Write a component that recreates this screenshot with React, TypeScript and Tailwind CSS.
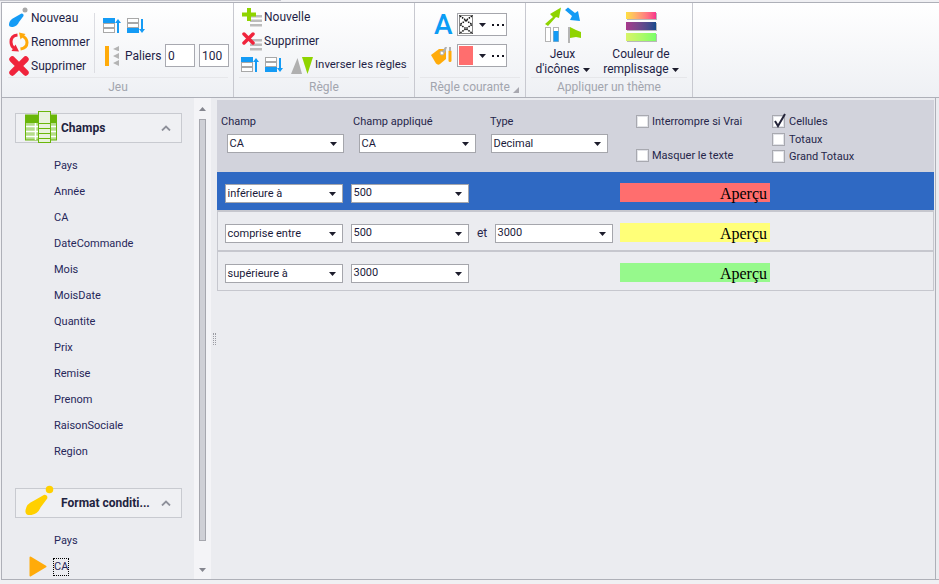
import type { ReactNode } from "react";

const font = { fontFamily: 'Roboto, "Noto Sans", sans-serif' };

const fields = ["Pays", "Année", "CA", "DateCommande", "Mois", "MoisDate", "Quantite", "Prix", "Remise", "Prenom", "RaisonSociale", "Region"];

const Caret = () => (
    <svg width="7" height="4" viewBox="0 0 7 4" className="shrink-0">
        <path d="M0 0h7L3.500 4z" fill="#1c1c2c" />
    </svg>
);

const Dots = () => (
    <svg width="12" height="2" viewBox="0 0 12 2" className="ml-[6px] shrink-0">
        <path d="M0 0h2v2H0zM5 0h2v2H5zM10 0h2v2h-2z" fill="#15151f" />
    </svg>
);

const BrushIcon = ({ color, dot, size = 22 }: { color: string; dot: string; size?: number }) => (
    <svg width={size} height={size} viewBox="0 0 22 22">
        <circle cx="17" cy="3" r="2.500" fill={dot} />
        <path d="M13.500 6.500 Q16 6.500 15.500 9 L11 15 Q9.500 19 5 20 Q0.500 20.500 1 17 Q1.500 12.500 6.500 10.500z" fill={color} />
    </svg>
);

const RenameIcon = () => (
    <svg width="20" height="20" viewBox="0 0 20 20" fill="none">
        <path d="M8.500 3 Q2 3.500 2 10 Q2 14 5 16" stroke="#f0243c" strokeWidth="3" />
        <path d="M10 19.500 L2.500 19 L6.500 12.500z" fill="#f0243c" />
        <path d="M12.500 3.500 Q18 6 18 10.500 Q18 16 11.500 17" stroke="#ffa90a" strokeWidth="3" />
        <path d="M10 0.500 L16.500 2 L11.500 7.500z" fill="#ffa90a" />
    </svg>
);

const CrossIcon = ({ size = 18 }: { size?: number }) => (
    <svg width={size} height={size} viewBox="0 0 18 18">
        <path d="M3 3 L15 15 M15 3 L3 15" stroke="#f0243c" strokeWidth="5.500" strokeLinecap="round" />
    </svg>
);

const MoveIcon = ({ down }: { down?: boolean }) => (
    <svg width="18" height="16" viewBox="0 0 18 16">
        <rect x="0.500" y="0.500" width="11" height="4" fill={down ? "#fff" : "#149bf5"} stroke={down ? "#a8a8a8" : "#149bf5"} />
        <rect x="0.500" y="5.500" width="11" height="4" fill="#fff" stroke="#a8a8a8" />
        <rect x="0.500" y="10.500" width="11" height="4" fill={down ? "#149bf5" : "#fff"} stroke={down ? "#149bf5" : "#a8a8a8"} />
        {down ? <path d="M14 1h2v10h2l-3 4-3-4h2z" fill="#149bf5" /> : <path d="M15 1l3 4h-2v10h-2V5h-2z" fill="#149bf5" />}
    </svg>
);

const PaliersIcon = () => (
    <svg width="16" height="20" viewBox="0 0 16 20">
        <rect x="0" y="0" width="4" height="20" fill="#ffab0a" />
        <path d="M8 3l6-3v5h-1zM8 10l6-3v6zM8 17l6-3v6z" fill="#b4b4b4" />
    </svg>
);

const RuleIcon = ({ add }: { add?: boolean }) => (
    <svg width="21" height="20" viewBox="0 0 21 20">
        <rect x="8" y="8" width="12" height="2.500" fill="#bcbcbc" />
        <rect x="8" y="12.500" width="12" height="2.500" fill="#bcbcbc" />
        <rect x="8" y="17" width="12" height="2.500" fill="#bcbcbc" />
        {add ? (
            <path d="M5 1h4v4.500h5v4H9V14H5V9.500H0v-4h5z" fill="#8fd400" />
        ) : (
            <path d="M2 3 L11 12 M11 3 L2 12" stroke="#f0243c" strokeWidth="3.500" strokeLinecap="round" />
        )}
    </svg>
);

const InvertIcon = () => (
    <svg width="24" height="18" viewBox="0 0 24 18">
        <path d="M0 18L6.500 2 11 18z" fill="#b0b0b0" />
        <path d="M11 1h11l-5.500 17z" fill="#8fd400" />
    </svg>
);

const TagIcon = () => (
    <svg width="21" height="21" viewBox="0 0 21 21">
        <path d="M0 10 L8 4 H15 V14 L9 19 Q7 20.500 5 18.500z" fill="#ffab0a" />
        <circle cx="11" cy="8" r="2" fill="#fff" stroke="#b0b0b0" />
        <path d="M11 7 L14 2 H16 L14 8z" fill="#b0b0b0" />
        <rect x="17.500" y="5" width="3" height="12" rx="1.500" fill="#ffab0a" />
        <rect x="18" y="2" width="2" height="4" fill="#b0b0b0" />
    </svg>
);

const IconSetsIcon = () => (
    <svg width="38" height="36" viewBox="0 0 38 36">
        <path d="M1 17 L9 10 L6 7 L17 0.500 L15 11 L12 10 L4 19z" fill="#8fd400" />
        <path d="M21 3 L24 0.500 L31 6 L34 4 L36 14 L26 13 L28 9z" fill="#149bf5" />
        <rect x="1.500" y="20.500" width="5" height="14" fill="#fff" stroke="#b4b4b4" />
        <rect x="9.500" y="20.500" width="5" height="14" fill="#fff" stroke="#b4b4b4" />
        <rect x="9.500" y="24" width="5" height="10.500" fill="#149bf5" />
        <rect x="24" y="20" width="2" height="16" fill="#b4b4b4" />
        <path d="M26 20 L32 23 L37 25 L37 31 L32 30 L26 31z" fill="#8fd400" />
    </svg>
);

const GradientBars = () => (
    <div className="flex flex-col gap-[3px]">
        <div className="h-[7px] w-[30px] bg-gradient-to-r from-[#ffe040] to-[#f8328c] shadow-[1px_1px_0_#b8b8b8]" />
        <div className="h-[8px] w-[30px] bg-gradient-to-r from-[#a8388c] to-[#124a8c] shadow-[1px_1px_0_#b8b8b8]" />
        <div className="h-[8px] w-[30px] bg-gradient-to-r from-[#d8f468] to-[#78ff68] shadow-[1px_1px_0_#b8b8b8]" />
    </div>
);

const TableIcon = () => (
    <svg width="33" height="33" viewBox="0 0 33 33">
        <rect x="0.500" y="4" width="31" height="25" fill="#b5dc8a" stroke="#6ab60a" />
        <rect x="0" y="4" width="32" height="8" fill="#6ab60a" />
        <path d="M1 15.500h30M1 20.500h30M1 25.500h30M10.500 12v17" stroke="#fff" strokeWidth="1.500" />
        <rect x="13.500" y="0.500" width="12" height="31" fill="#e8f2dc" stroke="#6ab60a" />
        <path d="M14 12.500h11M14 17.500h11M14 22.500h11M14 27.500h11" stroke="#6ab60a" />
    </svg>
);

const SmallAction = ({ icon, label, width }: { icon: ReactNode; label: string; width: string }) => (
    <div className="flex h-[24px] items-center">
        <div className={`flex shrink-0 items-center justify-center ${width}`}>{icon}</div>
        <span className="whitespace-nowrap">{label}</span>
    </div>
);

const RibbonGroup = ({ title, width, children, corner }: { title: string; width: string; children: ReactNode; corner?: boolean }) => (
    <div className={`relative flex shrink-0 flex-col border-r border-[#c8c9d0] ${width}`}>
        <div className="h-[75px]">{children}</div>
        <div className="mx-[5px] -mt-[1px] border-t border-[#e6e7ea] pt-[1px] text-center text-[12px] leading-[16px] text-[#a2a5ae]">{title}</div>
        {corner && (
            <svg width="6" height="6" viewBox="0 0 6 6" className="absolute right-[6px] bottom-[4px]">
                <path d="M6 0v6H0z" fill="#a8a8b0" />
            </svg>
        )}
    </div>
);

const Dropdown = ({ value, width, high }: { value: string; width: string; high?: boolean }) => (
    <div className={`flex h-[19px] shrink-0 items-center justify-between border border-[#a5a6ac] bg-white pr-[6px] pl-[1.500px] text-[11px] text-[#1a1a3a] ${width}`}>
        <span className={high ? "-mt-[1px]" : "mt-[1px]"}>{value}</span>
        <Caret />
    </div>
);

const Check = ({ label, checked, className, gap = "gap-[3px]" }: { label: string; checked?: boolean; className?: string; gap?: string }) => (
    <div className={`relative flex h-[13px] items-center ${gap} ${className ?? ""}`}>
        <div className="flex h-[13px] w-[13px] shrink-0 items-center justify-center border border-[#a8a9b0] bg-[#e2e3e8]">
            <div className="h-[9px] w-[9px] bg-white" />
        </div>
        {checked && (
            <svg width="14" height="15" viewBox="0 0 14 15" className="absolute -top-[2px] left-[1px]">
                <path d="M2 8 L5 13 L12 1" fill="none" stroke="#24243a" strokeWidth="2" />
            </svg>
        )}
        <span className="text-[11px] leading-[13px] whitespace-nowrap text-[#26264a]">{label}</span>
    </div>
);

const Preview = ({ color }: { color: string }) => (
    <div
        className={`-mt-[1px] ml-auto flex h-[19px] w-[150px] items-center justify-end pt-[3px] pr-[3px] text-[16px] text-black ${color}`}
        style={{ fontFamily: '"Liberation Serif", serif' }}
    >
        Aperçu
    </div>
);

const GroupHeader = ({ icon, label }: { icon: ReactNode; label: string }) => (
    <div className="relative mr-[12px] ml-[13px] flex h-[30px] items-center border border-[#c8cad0] bg-[#eff0f3] pl-[45px] text-[12px] font-bold text-[#1e2340]">
        <div className="absolute -top-[3px] left-[9px]">{icon}</div>
        <span>{label}</span>
        <svg width="10" height="6" viewBox="0 0 10 6" className="absolute top-[11px] right-[10px]">
            <path d="M1 5.500L5 1.500l4 4" fill="none" stroke="#8e909a" strokeWidth="1.800" />
        </svg>
    </div>
);

const FieldItem = ({ label, active }: { label: string; active?: boolean }) => (
    <div className="relative flex h-[26px] items-center pt-[2px] pl-[52px] text-[11px] text-[#27275a]">
        {active && (
            <svg width="18" height="21" viewBox="0 0 18 21" className="absolute top-[3px] left-[27px]">
                <path d="M1.500 1.500 L16.500 10.500 L1.500 19.500z" fill="#ffab0a" stroke="#ffab0a" strokeWidth="2" strokeLinejoin="round" />
            </svg>
        )}
        <span className={active ? "outline outline-1 outline-dotted outline-black" : ""}>{label}</span>
    </div>
);

export default function App() {
    return (
        <div className="flex h-[584px] w-[939px] flex-col overflow-hidden bg-[#f0f0f3] text-[12px]" style={font}>
            <div className="h-[2px] w-[281px] shrink-0 border-t border-[#c4c5cc]" />
            {/* ruban */}
            <div className="ml-[1px] flex h-[96px] shrink-0 border-y border-l border-[#aeb0b8] bg-gradient-to-b from-white to-[#eef0f4] pl-[1px] text-[#1e1e46]">
                <RibbonGroup title="Jeu" width="w-[231px]">
                    <div className="flex pt-[2px]">
                        <div className="w-[91px] pt-[1px] pl-[4px]">
                            <SmallAction icon={<BrushIcon color="#149bf5" dot="#a8a8a8" />} label="Nouveau" width="w-[24px]" />
                            <SmallAction icon={<RenameIcon />} label="Renommer" width="w-[24px]" />
                            <SmallAction icon={<CrossIcon size={20} />} label="Supprimer" width="w-[24px]" />
                        </div>
                        <div className="mt-[8px] h-[60px] w-px bg-[#dcdde2]" />
                        <div className="pl-[8px]">
                            <div className="flex h-[30px] items-end gap-[6px] pb-[1px]">
                                <MoveIcon />
                                <MoveIcon down />
                            </div>
                            <div className="mt-[9px] flex h-[23px] items-center">
                                <div className="ml-[2px] w-[20px]">
                                    <PaliersIcon />
                                </div>
                                <span className="w-[40px]">Paliers</span>
                                <div className="flex h-[23px] w-[30px] items-center border border-[#a8a9b0] bg-white pl-[2px]">0</div>
                                <div className="ml-[4px] flex h-[23px] w-[30px] items-center border border-[#a8a9b0] bg-white pl-[2px]">100</div>
                            </div>
                        </div>
                    </div>
                </RibbonGroup>
                <RibbonGroup title="Règle" width="w-[181px]">
                    <div className="pt-[2px] pl-[7px]">
                        <SmallAction icon={<RuleIcon add />} label="Nouvelle" width="w-[23px]" />
                        <SmallAction icon={<RuleIcon />} label="Supprimer" width="w-[23px]" />
                        <div className="flex h-[24px] items-center">
                            <MoveIcon />
                            <div className="ml-[6px]">
                                <MoveIcon down />
                            </div>
                            <div className="ml-[8px]">
                                <InvertIcon />
                            </div>
                            <span className="text-[11.400px] whitespace-nowrap">Inverser les règles</span>
                        </div>
                    </div>
                </RibbonGroup>
                <RibbonGroup title="Règle courante" width="w-[111px]" corner>
                    <div className="flex flex-col gap-[8px] pt-[10px] pl-[19px]">
                        <div className="flex h-[23px] items-center">
                            <span className="w-[23px] text-[28px] leading-none font-medium text-[#0a9cf5]">A</span>
                            <div className="flex h-[23px] w-[50px] items-center border border-[#a5a6ac] bg-white pl-[1px]">
                                <svg width="14" height="19" viewBox="0 0 14 19">
                                    <rect width="14" height="19" fill="#fff" stroke="#111" />
                                    <path d="M1 1L13 9.500L1 18M13 1L1 9.500L13 18" fill="none" stroke="#111" strokeWidth="1.500" strokeDasharray="1.500 1" />
                                </svg>
                                <div className="ml-[6px]">
                                    <Caret />
                                </div>
                                <Dots />
                            </div>
                        </div>
                        <div className="flex h-[23px] items-center">
                            <div className="-ml-[3px] w-[26px]">
                                <TagIcon />
                            </div>
                            <div className="flex h-[23px] w-[50px] items-center border border-[#a5a6ac] bg-white pl-[1px]">
                                <div className="h-[19px] w-[14px] bg-[#ff6e6e]" />
                                <div className="ml-[6px]">
                                    <Caret />
                                </div>
                                <Dots />
                            </div>
                        </div>
                    </div>
                </RibbonGroup>
                <RibbonGroup title="Appliquer un thème" width="w-[167px]">
                    <div className="flex pt-[4px] text-center leading-[15px]">
                        <div className="flex w-[73px] flex-col items-center">
                            <IconSetsIcon />
                            <div className="mt-[4px]">Jeux</div>
                            <div className="flex items-center gap-[3px]">
                                d'icônes
                                <Caret />
                            </div>
                        </div>
                        <div className="flex w-[84px] flex-col items-center">
                            <div className="h-[36px] pt-[5px]">
                                <GradientBars />
                            </div>
                            <div className="mt-[4px]">Couleur de</div>
                            <div className="flex items-center gap-[3px]">
                                remplissage
                                <Caret />
                            </div>
                        </div>
                    </div>
                </RibbonGroup>
            </div>

            {/* corps */}
            <div className="ml-[1px] flex h-[482px] shrink-0 border-b border-[#aeb0b8] bg-[#ebecf0]">
                <div className="w-px shrink-0 bg-[#aeb0b8]" />
                {/* champs */}
                <div className="h-full w-[192px] shrink-0 overflow-hidden pt-[15px]">
                    <GroupHeader icon={<TableIcon />} label="Champs" />
                    <div className="mt-[9px] mb-[24px]">
                        {fields.map((f) => (
                            <FieldItem key={f} label={f} />
                        ))}
                    </div>
                    <GroupHeader
                        icon={
                            <div className="-mt-[1px] -ml-[1px]">
                                <BrushIcon color="#ffd000" dot="#ffd000" size={33} />
                            </div>
                        }
                        label="Format conditi..."
                    />
                    <div className="mt-[9px]">
                        <FieldItem label="Pays" />
                        <FieldItem label="CA" active />
                    </div>
                </div>
                {/* ascenseur */}
                <div className="flex h-full w-[17px] shrink-0 flex-col items-center bg-[#f4f4f7] pt-[9px] pb-[7px]">
                    <svg width="7" height="4" viewBox="0 0 7 4">
                        <path d="M3.500 0L7 4H0z" fill="#85868f" />
                    </svg>
                    <div className="mt-[8px] h-[422px] w-[7px] border border-[#a6a7ae] bg-[#cfd0d6]" />
                    <svg width="7" height="4" viewBox="0 0 7 4" className="mt-auto">
                        <path d="M0 0h7L3.500 4z" fill="#85868f" />
                    </svg>
                </div>
                <div className="flex w-[6px] shrink-0 items-center justify-center">
                    <div className="h-[12px] w-[3px] border-x border-dotted border-[#9a9ba2]" />
                </div>
                {/* regles */}
                <div className="w-[717px] shrink-0 pt-[2px]">
                    <div className="flex h-[72px] bg-[#d2d3dc] pl-[4px] text-[11px]">
                        <div className="w-[132px] pt-[14px]">
                            <div className="leading-[16px] text-[#26264a]">Champ</div>
                            <div className="mt-[4px] ml-[6px]">
                                <Dropdown value="CA" width="w-[117px]" />
                            </div>
                        </div>
                        <div className="w-[137px] pt-[14px]">
                            <div className="leading-[16px] text-[#26264a]">Champ appliqué</div>
                            <div className="mt-[4px] ml-[6px]">
                                <Dropdown value="CA" width="w-[117px]" />
                            </div>
                        </div>
                        <div className="w-[146px] pt-[14px]">
                            <div className="leading-[16px] text-[#26264a]">Type</div>
                            <div className="mt-[4px] ml-[1px]">
                                <Dropdown value="Decimal" width="w-[117px]" />
                            </div>
                        </div>
                        <div className="flex w-[136px] flex-col justify-between pt-[15px] pb-[10px]">
                            <Check label="Interrompre si Vrai" />
                            <Check label="Masquer le texte" />
                        </div>
                        <div className="flex flex-col pt-[15px]">
                            <Check label="Cellules" checked gap="gap-[4px]" />
                            <Check label="Totaux" className="mt-[5px]" gap="gap-[4px]" />
                            <Check label="Grand Totaux" className="mt-[4px]" gap="gap-[4px]" />
                        </div>
                    </div>
                    <div className="flex h-[38px] items-start bg-[#2f69c3] pt-[12px] pr-[164px] pl-[8px]">
                        <Dropdown value="inférieure à" width="w-[118px]" />
                        <div className="ml-[8px]">
                            <Dropdown value="500" width="w-[118px]" high />
                        </div>
                        <Preview color="bg-[#ff6e6e]" />
                    </div>
                    <div className="flex h-[40px] items-start border-x border-t-2 border-[#c6c7ce] pt-[12px] pr-[163px] pl-[7px] text-[11px]">
                        <Dropdown value="comprise entre" width="w-[118px]" />
                        <div className="ml-[8px]">
                            <Dropdown value="500" width="w-[118px]" high />
                        </div>
                        <span className="ml-[8px] w-[18px] text-[12px] leading-[18px] text-[#26264a]">et</span>
                        <Dropdown value="3000" width="w-[118px]" high />
                        <Preview color="bg-[#ffff78]" />
                    </div>
                    <div className="flex h-[41px] items-start border-x border-t-2 border-b border-[#c6c7ce] pt-[12px] pr-[163px] pl-[7px]">
                        <Dropdown value="supérieure à" width="w-[118px]" />
                        <div className="ml-[8px]">
                            <Dropdown value="3000" width="w-[118px]" high />
                        </div>
                        <Preview color="bg-[#96f98c]" />
                    </div>
                </div>
                <div className="ml-px w-px shrink-0 bg-[#aeb0b8]" />
            </div>
        </div>
    );
}
